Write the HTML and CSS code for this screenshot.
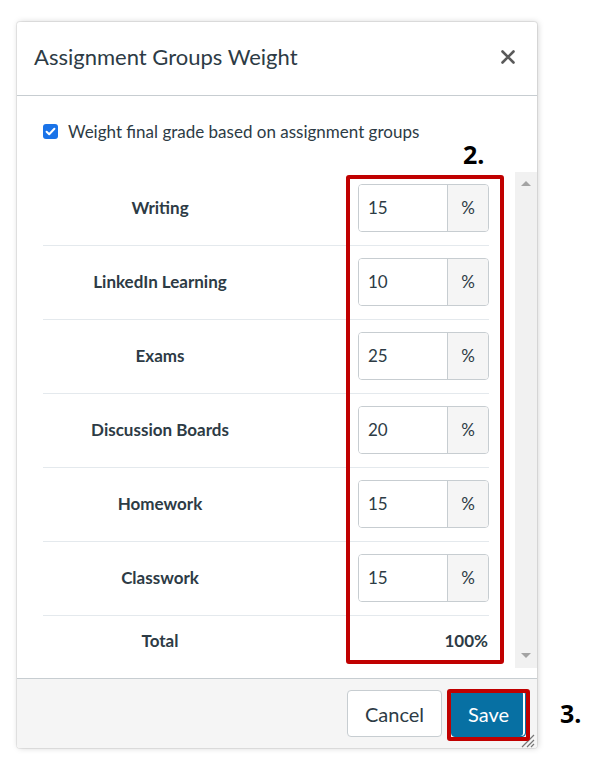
FILE: index.html
```html
<!DOCTYPE html>
<html lang="en">
<head>
<meta charset="utf-8">
<title>Assignment Groups Weight</title>
<link rel="stylesheet" href="styles.css">
</head>
<body>
<div class="page">
  <div class="modal">
    <header class="modal-header">
      <h2 class="modal-title">Assignment Groups Weight</h2>
      <button class="close" aria-label="Close">
        <svg width="14" height="14" viewBox="0 0 14 14"><path d="M1.5 1.5 L12.5 12.5 M12.5 1.5 L1.5 12.5" stroke="#5a5a5a" stroke-width="2.6" stroke-linecap="round"/></svg>
      </button>
    </header>
    <div class="modal-body">
      <label class="check-row">
        <span class="checkbox"><svg width="15" height="15" viewBox="0 0 15 15"><path d="M3.6 7.7 L6.2 10.2 L11.4 4.8" fill="none" stroke="#fff" stroke-width="2" stroke-linecap="round" stroke-linejoin="round"/></svg></span>
        <span>Weight final grade based on assignment groups</span>
      </label>
      <div class="scroll">
        <div class="scroll-content">
          <div class="row"><div class="name">Writing</div><div class="field"><span class="val">15</span><span class="addon">%</span></div></div>
          <div class="row"><div class="name">LinkedIn Learning</div><div class="field"><span class="val">10</span><span class="addon">%</span></div></div>
          <div class="row"><div class="name">Exams</div><div class="field"><span class="val">25</span><span class="addon">%</span></div></div>
          <div class="row"><div class="name">Discussion Boards</div><div class="field"><span class="val">20</span><span class="addon">%</span></div></div>
          <div class="row"><div class="name">Homework</div><div class="field"><span class="val">15</span><span class="addon">%</span></div></div>
          <div class="row"><div class="name">Classwork</div><div class="field"><span class="val">15</span><span class="addon">%</span></div></div>
          <div class="row total"><div class="name">Total</div><div class="sum">100%</div></div>
        </div>
        <div class="scrollbar">
          <span class="arrow up"></span>
          <span class="arrow down"></span>
        </div>
      </div>
    </div>
    <footer class="modal-footer">
      <button class="btn">Cancel</button>
      <button class="btn btn-primary">Save</button>
    </footer>
    <svg class="resize" width="16" height="16" viewBox="0 0 16 16">
      <path d="M15 3 L3 15 M15 8 L8 15 M15 12 L12 15" stroke="#777" stroke-width="1.2"/>
    </svg>
  </div>
  <div class="annot annot-2">2.</div>
  <div class="hl hl-inputs"></div>
  <div class="hl hl-save"></div>
  <div class="annot annot-3">3.</div>
</div>
</body>
</html>
```
FILE: styles.css
```css
* { box-sizing: border-box; }
html, body { margin: 0; padding: 0; background: #fff; }
body { font-family: Lato, "Noto Sans", sans-serif; color: #2d3b45; }

.page {
  position: relative;
  width: 594px;
  height: 767px;
  padding: 22px 0 0 17px;
}

.modal {
  position: relative;
  width: 520px;
  height: 726px;
  background: #fff;
  border-radius: 3px;
  box-shadow: 0 0 0 1px rgba(0,0,0,0.07), 1px 0 6px rgba(0,0,0,0.18);
  display: flex;
  flex-direction: column;
}

.modal-header {
  height: 74px;
  border-bottom: 1px solid #c7cdd1;
  display: flex;
  align-items: center;
  justify-content: space-between;
  padding: 0 22px 4px 17px;
}
.modal-title {
  margin: 0;
  font-size: 22px;
  font-weight: 400;
  color: #2d3b45;
}
.close {
  border: 0;
  background: none;
  padding: 0;
  width: 14px;
  height: 14px;
  display: block;
}
.close svg { display: block; }

.modal-body {
  flex: 1;
  padding-top: 25px;
  display: flex;
  flex-direction: column;
}

.check-row {
  display: flex;
  align-items: center;
  gap: 10px;
  height: 20px;
  padding-left: 26px;
  font-size: 17px;
  color: #2d3b45;
}
.checkbox {
  width: 15px;
  height: 15px;
  border-radius: 3px;
  background: #1a73e8;
  display: block;
}
.checkbox svg { display: block; }

.scroll {
  margin-top: 31px;
  height: 496px;
  display: flex;
}
.scroll-content {
  flex: 1;
  overflow: hidden;
  padding-left: 26px;
}
.row {
  width: 446px;
  height: 74px;
  padding-bottom: 2px;
  border-bottom: 1px solid #e4e9ed;
  display: flex;
  align-items: center;
  justify-content: space-between;
}
.name {
  width: 234px;
  text-align: center;
  font-weight: 700;
  font-size: 17px;
}
.field {
  width: 131px;
  height: 48px;
  border: 1px solid #c7cdd1;
  border-radius: 4px;
  display: flex;
  overflow: hidden;
}
.val {
  width: 89px;
  background: #fff;
  border-right: 1px solid #c7cdd1;
  padding-left: 9px;
  display: flex;
  align-items: center;
  font-size: 17px;
}
.addon {
  flex: 1;
  background: #f5f5f5;
  display: flex;
  align-items: center;
  justify-content: center;
  font-size: 17px;
}
.row.total {
  height: 50px;
  border-bottom: 0;
}
.sum {
  font-weight: 700;
  font-size: 17px;
  padding-right: 1px;
}

.scrollbar {
  width: 22px;
  background: #f1f1f1;
  position: relative;
}
.arrow {
  position: absolute;
  left: 6px;
  width: 0;
  height: 0;
  border-left: 5px solid transparent;
  border-right: 5px solid transparent;
}
.arrow.up { top: 9px; border-bottom: 5px solid #a3a3a3; }
.arrow.down { bottom: 10px; border-top: 5px solid #a3a3a3; }

.modal-footer {
  height: 70px;
  background: #f5f5f5;
  border-top: 1px solid #c7cdd1;
  display: flex;
  align-items: center;
  justify-content: flex-end;
  gap: 9px;
  padding: 0 11px 0 0;
  border-radius: 0 0 3px 3px;
}
.btn {
  height: 47px;
  border: 1px solid #c7cdd1;
  border-radius: 4px;
  background: #fff;
  color: #2d3b45;
  font-family: Lato, "Noto Sans", sans-serif;
  font-size: 20px;
  padding: 0;
  width: 95px;
}
.btn-primary {
  width: 75px;
  background: #0770a3;
  border-color: #0770a3;
  color: #fff;
  box-shadow: inset -2px 0 0 #fff;
}

.resize {
  position: absolute;
  right: 2px;
  bottom: 0;
}

.annot {
  position: absolute;
  font-family: "Open Sans", "Liberation Sans", sans-serif;
  font-weight: 700;
  font-size: 25px;
  color: #000;
  line-height: 1;
}
.annot-2 { left: 463px; top: 142px; }
.annot-3 { left: 560px; top: 701px; }

.hl {
  position: absolute;
  border: 4px solid #c00000;
  border-radius: 3px;
}
.hl-inputs { left: 346px; top: 175px; width: 158px; height: 489px; }
.hl-save { left: 447px; top: 689px; width: 83px; height: 52px; }
```
